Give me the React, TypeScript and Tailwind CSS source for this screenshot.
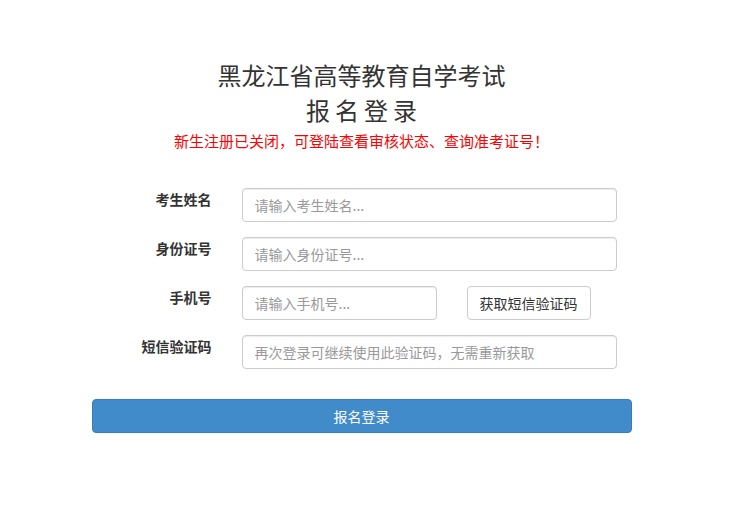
export default function App() {
  const font = { fontFamily: '"Noto Sans CJK SC", "Noto Sans", sans-serif' };
  const inputCls =
    "h-[34px] w-full rounded-[4px] border border-[#ccc] px-3 text-[14px] text-[#555] placeholder:text-[#999] outline-none shadow-[inset_0_1px_1px_rgba(0,0,0,0.075)]";
  const labelCls = "w-[135px] shrink-0 pr-[15px] pt-[1px] text-right text-[14px] font-bold leading-[20px] text-[#333]";

  return (
    <div className="min-h-[512px] w-[753px] bg-white" style={font}>
      <div className="w-[723px] pt-[57px]">
        <div className="text-center text-[#333]">
          <h1 className="text-[24px] leading-[35px] font-normal">黑龙江省高等教育自学考试</h1>
          <h2 className="text-[24px] leading-[35px] font-normal tracking-[5px] pl-[5px]">报名登录</h2>
          <p className="mt-[4px] text-[15px] leading-[20px] text-[#ff0000]">
            新生注册已关闭，可登陆查看审核状态、查询准考证号！
          </p>
        </div>

        <form className="mx-auto mt-[37px] w-[540px]" onSubmit={(e) => e.preventDefault()}>
          <div className="mb-[15px] flex">
            <label className={labelCls}>考生姓名</label>
            <div className="w-[405px] px-[15px]">
              <input className={inputCls} placeholder="请输入考生姓名..." />
            </div>
          </div>
          <div className="mb-[15px] flex">
            <label className={labelCls}>身份证号</label>
            <div className="w-[405px] px-[15px]">
              <input className={inputCls} placeholder="请输入身份证号..." />
            </div>
          </div>
          <div className="mb-[15px] flex">
            <label className={labelCls}>手机号</label>
            <div className="w-[225px] px-[15px]">
              <input className={inputCls} placeholder="请输入手机号..." />
            </div>
            <div className="px-[15px]">
              <button
                type="button"
                className="h-[34px] w-[124px] rounded-[4px] border border-[#ccc] bg-white text-[14px] text-[#333]"
              >
                获取短信验证码
              </button>
            </div>
          </div>
          <div className="mb-[15px] flex">
            <label className={labelCls}>短信验证码</label>
            <div className="w-[405px] px-[15px]">
              <input className={inputCls} placeholder="再次登录可继续使用此验证码，无需重新获取" />
            </div>
          </div>
          <button
            type="submit"
            className="mt-[15px] h-[34px] w-full rounded-[4px] border border-[#357ebd] bg-[#428bca] text-[14px] text-white"
          >
            报名登录
          </button>
        </form>
      </div>
    </div>
  );
}
